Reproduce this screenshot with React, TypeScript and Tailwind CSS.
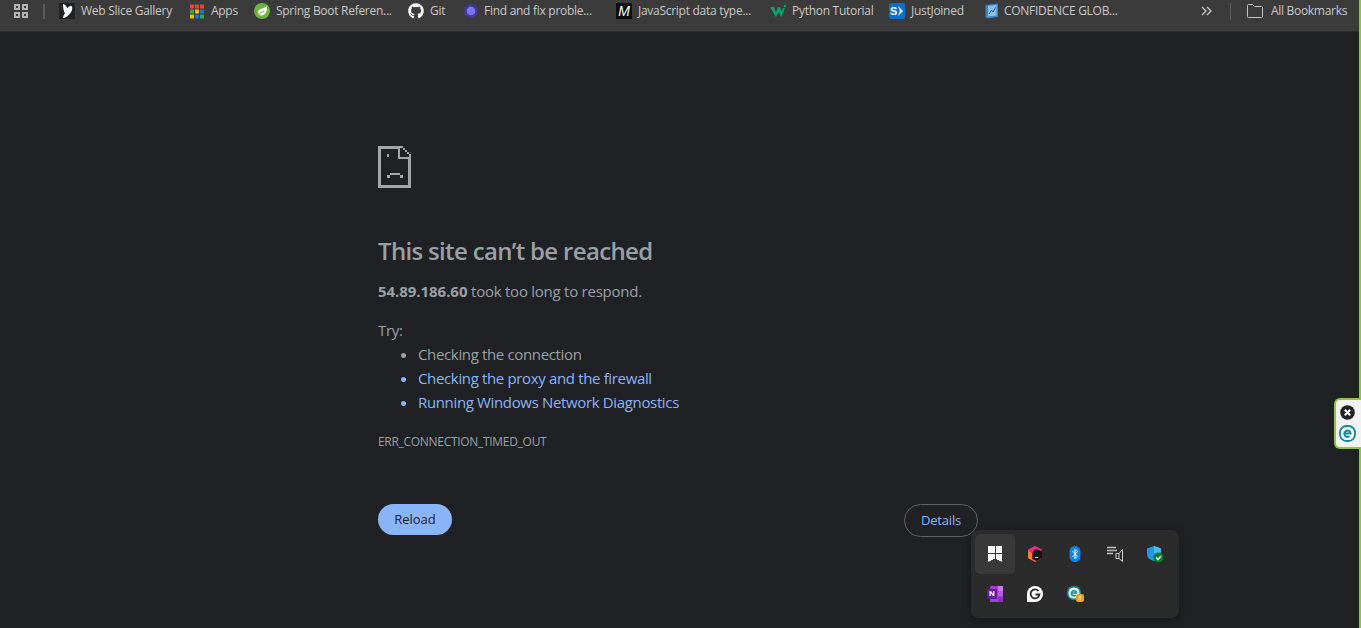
import { FaGithub } from "react-icons/fa";

const font = "[font-family:'Open_Sans','Noto_Sans',sans-serif]";

function WebSlice() {
  return (
    <svg width="16" height="16" viewBox="0 0 16 16" className="shrink-0">
      <rect width="16" height="16" fill="#1f2326" />
      <path d="M4 1 C6 1.5 7.5 3 8.5 5.5 C9.5 3.5 11 2.5 13 3.5 C14 6.5 12 10 9.5 12 C8 14 6 15 4 15 C4 13 5 11.5 6 10.5 C4.5 7.5 4 4.5 4 1Z" fill="#fff" />
    </svg>
  );
}
function Apps() {
  const c = ["#ea4335", "#ea4335", "#ea4335", "#34a853", "#fbbc04", "#1a73e8", "#fbbc04", "#1a73e8", "#34a853"];
  return (
    <svg width="14" height="15" viewBox="0 0 14 15" className="shrink-0">
      {c.map((f, i) => (
        <rect key={i} x={(i % 3) * 5} y={Math.floor(i / 3) * 5 + 0.5} width="4" height="4" fill={f} />
      ))}
    </svg>
  );
}
function Spring() {
  return (
    <svg width="16" height="16" viewBox="0 0 16 16" className="shrink-0">
      <circle cx="8" cy="8" r="8" fill="#6db33f" />
      <path d="M13 3 C13.5 8 11.5 12.5 7 12.5 C4.5 12.5 3.5 10.5 4 8.5 C5 5.5 9.5 6 13 3Z" fill="#fff" />
      <path d="M3.5 13 C5.5 10.5 8 9 10 8" stroke="#6db33f" strokeWidth="1" fill="none" />
    </svg>
  );
}
function FindIcon() {
  return (
    <svg width="16" height="16" viewBox="0 0 16 16" className="shrink-0">
      <path d="M8 0.5 L14.5 4.2 V11.8 L8 15.5 L1.5 11.8 V4.2Z" fill="#43389f" />
      <circle cx="8" cy="8" r="4.3" fill="#7f74f0" />
    </svg>
  );
}
function MIcon() {
  return (
    <div className="w-4 h-4 shrink-0 bg-[#0d0d0d] flex items-center justify-center text-white italic font-normal text-[14px] leading-none [font-family:'Liberation_Sans',sans-serif]">
      M
    </div>
  );
}
function WIcon() {
  return (
    <svg width="16" height="12" viewBox="0 0 16 12" className="shrink-0">
      <path d="M0 2 H4 L6 7 L8 2 H10 L11.5 7 L13 3 H15 L11.5 11.5 H10.5 L8.7 6.5 L6.5 11.5 H5.5Z" fill="#04a56a" />
      <rect x="14" y="0" width="2" height="2" fill="#04a56a" />
    </svg>
  );
}
function SIcon() {
  return (
    <div className="relative w-4 h-4 shrink-0 rounded-[2px] bg-[#0b6fd0] flex items-center text-white font-bold text-[11px] leading-none pl-[1px] [font-family:'Liberation_Sans',sans-serif]">
      S
      <svg width="7" height="10" viewBox="0 0 7 10" className="absolute right-0 top-[3px]">
        <path d="M0 0 L5 5 L0 10 L2 5Z" fill="#fff" />
      </svg>
    </div>
  );
}
function DocIcon() {
  return (
    <svg width="16" height="16" viewBox="0 0 16 16" className="shrink-0">
      <path d="M1.5 2 L14 0.5 V14 L3 15.5 L1.5 14Z" fill="#3f84c4" />
      <path d="M4 3 L12.5 2 V12.5 L4 13.5Z" fill="#8cbfe6" />
      <path d="M5 11 L7.5 7 L9 9 L11.5 4.5" stroke="#1f5e9c" strokeWidth="1" fill="none" />
    </svg>
  );
}
function GridIcon() {
  return (
    <svg width="14" height="14" viewBox="0 0 14 14" className="shrink-0" fill="none" stroke="#b4b4b4" strokeWidth="2" shapeRendering="crispEdges">
      <rect x="1" y="1" width="4" height="4" />
      <rect x="9" y="1" width="4" height="4" />
      <rect x="1" y="9" width="4" height="4" />
      <rect x="9" y="9" width="4" height="4" />
    </svg>
  );
}
function Folder() {
  return (
    <svg width="16" height="14" viewBox="0 0 16 14" className="shrink-0" fill="none" stroke="#c4c4c4" strokeWidth="1">
      <path d="M0.5 12 V1.5 Q0.5 0.5 1.5 0.5 H5.5 L7.5 2.5 H14.5 Q15.5 2.5 15.5 3.5 V12.5 Q15.5 13.5 14.5 13.5 H1.5 Q0.5 13.5 0.5 12.5Z" />
    </svg>
  );
}
function Chevrons() {
  return (
    <svg width="11" height="10" viewBox="0 0 11 10" fill="none" stroke="#c4c4c4" strokeWidth="1.4" className="shrink-0">
      <path d="M1 1 L5 5 L1 9" />
      <path d="M6 1 L10 5 L6 9" />
    </svg>
  );
}

function SadFile() {
  return (
    <svg width="33" height="42" viewBox="0 0 33 42" fill="#a6a6a6" shapeRendering="crispEdges" className="block">
      <path d="M0 0 H22 V3 H3 V39 H30 V13 H20 V0 H22 V11 H30 V11 H33 V42 H0Z" />
      <rect x="22" y="0" width="3" height="2" />
      <rect x="25" y="2" width="2" height="2" />
      <rect x="27" y="4" width="2" height="2" />
      <rect x="29" y="6" width="2" height="2" />
      <rect x="31" y="8" width="2" height="3" />
      <rect x="9" y="8" width="2" height="3" />
      <rect x="12" y="27" width="10" height="2" />
      <rect x="9" y="29" width="3" height="3" />
      <rect x="22" y="29" width="3" height="3" />
    </svg>
  );
}

const bookmarks = [
  { icon: <WebSlice />, text: "Web Slice Gallery", box: "w-[131px]", gap: "gap-[6px]", tw: "w-[91px]" },
  { icon: <Apps />, text: "Apps", box: "w-[64px]", gap: "gap-[7px]", tw: "w-[27px]" },
  { icon: <Spring />, text: "Spring Boot Referen...", box: "w-[154px]", gap: "gap-[6px]", tw: "w-[116px]" },
  { icon: <FaGithub className="w-4 h-4 shrink-0 text-white" />, text: "Git", box: "w-[55px]", gap: "gap-[6px]", tw: "w-[16px]" },
  { icon: <FindIcon />, text: "Find and fix proble...", box: "w-[153px]", gap: "gap-[5px]", tw: "w-[109px]" },
  { icon: <MIcon />, text: "JavaScript data type...", box: "w-[154px]", gap: "gap-[6px]", tw: "w-[115px]" },
  { icon: <WIcon />, text: "Python Tutorial", box: "w-[119px]", gap: "gap-[6px]", tw: "w-[82px]" },
  { icon: <SIcon />, text: "JustJoined", box: "w-[95px]", gap: "gap-[6px]", tw: "w-[55px]" },
  { icon: <DocIcon />, text: "CONFIDENCE GLOB...", box: "w-[133px]", gap: "gap-[4px]", tw: "w-[113px]" },
];

function TrayBookmark() {
  return (
    <svg width="16" height="16" viewBox="0 0 16 16" fill="#fff" shapeRendering="crispEdges">
      <rect x="1" y="0" width="6.5" height="6.5" />
      <rect x="8.5" y="0" width="6.5" height="6.5" />
      <path d="M1 7.5 H7.5 V13 L1 16Z" />
      <path d="M8.5 7.5 H15 V16 L8.5 13Z" />
    </svg>
  );
}
function TrayRider() {
  return (
    <svg width="16" height="16" viewBox="0 0 16 16">
      <defs>
        <linearGradient id="rider" x1="0" y1="0" x2="0.6" y2="1">
          <stop offset="0" stopColor="#ff2d78" />
          <stop offset="0.55" stopColor="#e0289a" />
          <stop offset="1" stopColor="#f08a1d" />
        </linearGradient>
      </defs>
      <path d="M8 0 L15 3.5 V12 L8 16 L1 12 V3.5Z" fill="url(#rider)" />
      <path d="M1 5 L1 12 L5 14.2 V7Z" fill="#f58220" />
      <path d="M8 3 L15 5 V12 L9.5 15 L5.5 13 V7Z" fill="#1a1016" />
      <rect x="8" y="11" width="3" height="1" fill="#ddd" />
    </svg>
  );
}
function TrayBluetooth() {
  return (
    <svg width="16" height="16" viewBox="0 0 16 16">
      <rect x="2.5" y="0" width="11" height="16" rx="5.5" fill="#0a84f5" />
      <path d="M5.5 5 L10.5 10.5 L8 13 V3 L10.5 5.5 L5.5 11" fill="none" stroke="#fff" strokeWidth="1" />
    </svg>
  );
}
function TraySpeaker() {
  return (
    <svg width="16" height="16" viewBox="0 0 16 16" fill="none" stroke="#d0d0d0" strokeWidth="1">
      <path d="M0 1.5 H9 M0 4.5 H10 M0 7.5 H6" stroke="#c0c0c0" strokeWidth="1.5" />
      <path d="M9 7.5 H12 L15.5 3.5 V15.5 L12 12.5 H9Z" />
      <path d="M12 7.5 V12.5" />
    </svg>
  );
}
function TrayShield() {
  return (
    <svg width="18" height="18" viewBox="0 0 18 18">
      <path d="M8 1 L15 3.5 V9 C15 13 11.5 15 8 16 C4.5 15 1 13 1 9 V3.5Z" fill="#1d9be0" />
      <path d="M8 1 L15 3.5 V8 H8Z" fill="#46bdf0" />
      <circle cx="12.5" cy="12.5" r="5" fill="#0c7c2e" />
      <path d="M10 12.5 L12 14.5 L15 11" fill="none" stroke="#fff" strokeWidth="1.3" />
    </svg>
  );
}
function TrayOneNote() {
  return (
    <div className="relative w-4 h-4">
      <svg width="16" height="16" viewBox="0 0 16 16">
        <rect x="3" y="0" width="13" height="16" rx="1" fill="#a43fd6" />
        <rect x="11" y="0" width="5" height="5.3" fill="#c77ae8" />
        <rect x="11" y="5.3" width="5" height="5.3" fill="#b35ce0" />
        <rect x="11" y="10.6" width="5" height="5.4" fill="#8d2fc0" />
      </svg>
      <div className="absolute left-0 top-[3px] w-[10px] h-[10px] bg-[#5f1f9c] text-white text-[8px] font-bold leading-[10px] text-center [font-family:'Liberation_Sans',sans-serif]">
        N
      </div>
    </div>
  );
}
function TrayGrammarly() {
  return (
    <svg width="16" height="16" viewBox="0 0 16 16">
      <path d="M8 0 A8 8 0 0 1 8 16 H0 V8 A8 8 0 0 1 8 0Z" fill="#fff" />
      <path d="M11.5 5 A4.5 4.5 0 1 0 12.5 8.5 H8.5" fill="none" stroke="#2b2b2b" strokeWidth="1.8" />
    </svg>
  );
}
function EsetE({ size }: { size: number }) {
  return (
    <svg width={size} height={size} viewBox="0 0 16 16">
      <rect x="1" y="1" width="14" height="14" rx="6" fill="#fff" stroke="#0f8f95" strokeWidth="1.8" />
      <path d="M5 8 H11 A3 3 0 1 0 10 10.5" fill="none" stroke="#0f8f95" strokeWidth="1.8" />
    </svg>
  );
}
function TrayEset() {
  return (
    <div className="relative w-4 h-4">
      <EsetE size={14} />
      <svg width="8" height="8" viewBox="0 0 8 8" className="absolute right-[-1px] bottom-0">
        <rect width="8" height="8" rx="2" fill="#f0a020" />
        <rect x="3.4" y="1.5" width="1.2" height="3" fill="#fff" />
        <rect x="3.4" y="5.3" width="1.2" height="1.2" fill="#fff" />
      </svg>
    </div>
  );
}

const tray = [
  { icon: <TrayBookmark />, cls: "bg-[#383838] rounded-[5px]" },
  { icon: <TrayRider />, cls: "" },
  { icon: <TrayBluetooth />, cls: "" },
  { icon: <TraySpeaker />, cls: "" },
  { icon: <TrayShield />, cls: "" },
  { icon: <TrayOneNote />, cls: "" },
  { icon: <TrayGrammarly />, cls: "" },
  { icon: <TrayEset />, cls: "" },
];

export default function App() {
  return (
    <div className={`relative h-[628px] w-[1361px] overflow-hidden bg-[#202124] ${font}`}>
      <div className="flex h-[32px] items-center bg-[#3b3b3b] border-b border-[#2a2a2a] pb-[9px]">
        <div className="w-[59px] pl-[14px] flex items-center shrink-0">
          <GridIcon />
          <div className="ml-[15px] w-[2px] h-[15px] bg-[#5a5a5a]" />
        </div>
        {bookmarks.map((b) => (
          <div key={b.text} className={`flex items-center shrink-0 ${b.box} ${b.gap}`}>
            {b.icon}
            <span className={`${b.tw} whitespace-nowrap text-[12px] text-[#c9c9c9] tracking-[-0.28px]`}>{b.text}</span>
          </div>
        ))}
        <div className="flex items-center ml-[84px]">
          <Chevrons />
          <div className="ml-[18px] w-[1px] h-[17px] bg-[#5a5a5a]" />
          <div className="ml-[16px] flex items-center gap-2">
            <Folder />
            <span className="whitespace-nowrap text-[12px] text-[#c9c9c9] tracking-[-0.3px]">All Bookmarks</span>
          </div>
        </div>
      </div>

      <main className="ml-[378px] w-[600px] pt-[114px]">
        <SadFile />
        <h1 className="mt-[47px] text-[24px] leading-[32px] font-semibold text-[#9aa0a6] tracking-[-0.67px]">This site can’t be reached</h1>
        <p className="mt-[12px] text-[15px] leading-[24px] text-[#9aa0a6] tracking-[-0.25px]">
          <strong className="font-bold tracking-[-0.05px]">54.89.186.60</strong> took too long to respond.
        </p>
        <p className="mt-[15px] text-[15px] leading-[24px] text-[#9aa0a6] tracking-[-0.33px]">Try:</p>
        <ul className="list-disc pl-[40px] text-[15px] leading-[24px] text-[#9aa0a6] tracking-[-0.35px]">
          <li>Checking the connection</li>
          <li className="text-[#8ab4f8]">Checking the proxy and the firewall</li>
          <li className="text-[#8ab4f8]">Running Windows Network Diagnostics</li>
        </ul>
        <p className="mt-[20px] text-[12px] leading-[16px] text-[#9aa0a6] tracking-[-0.3px]">ERR_CONNECTION_TIMED_OUT</p>
        <div className="mt-[54px] flex items-start justify-between">
          <button className="h-[31px] w-[74px] rounded-full bg-[#8ab4f8] text-[13px] text-[#202124] tracking-[-0.05px]">Reload</button>
          <button className="h-[33px] w-[74px] rounded-full border border-[#5f6368] text-[13px] text-[#8ab4f8] tracking-[-0.2px]">Details</button>
        </div>
      </main>

      <div className="absolute left-[971px] top-[530px] w-[208px] grid grid-cols-5 p-[4px] rounded-[8px] bg-[#2b2b2b] shadow-[0_2px_8px_rgba(0,0,0,0.3)]">
        {tray.map((t, i) => (
          <div key={i} className={`h-[40px] flex items-center justify-center ${t.cls}`}>
            {t.icon}
          </div>
        ))}
      </div>

      <div className="absolute right-0 top-0 h-full w-[2px] bg-[#8cc63f]" />

      <div className="absolute right-0 top-[398px] w-[27px] h-[51px] flex flex-col items-center justify-center gap-[5px] pr-[2px] bg-[#f2f2f2] border-2 border-r-0 border-[#8cc63f] rounded-l-[6px]">
        <svg width="15" height="15" viewBox="0 0 15 15">
          <circle cx="7.5" cy="7.5" r="7.3" fill="#222" />
          <path d="M4.8 4.8 L10.2 10.2 M10.2 4.8 L4.8 10.2" stroke="#fff" strokeWidth="2" />
        </svg>
        <EsetE size={17} />
      </div>
    </div>
  );
}
